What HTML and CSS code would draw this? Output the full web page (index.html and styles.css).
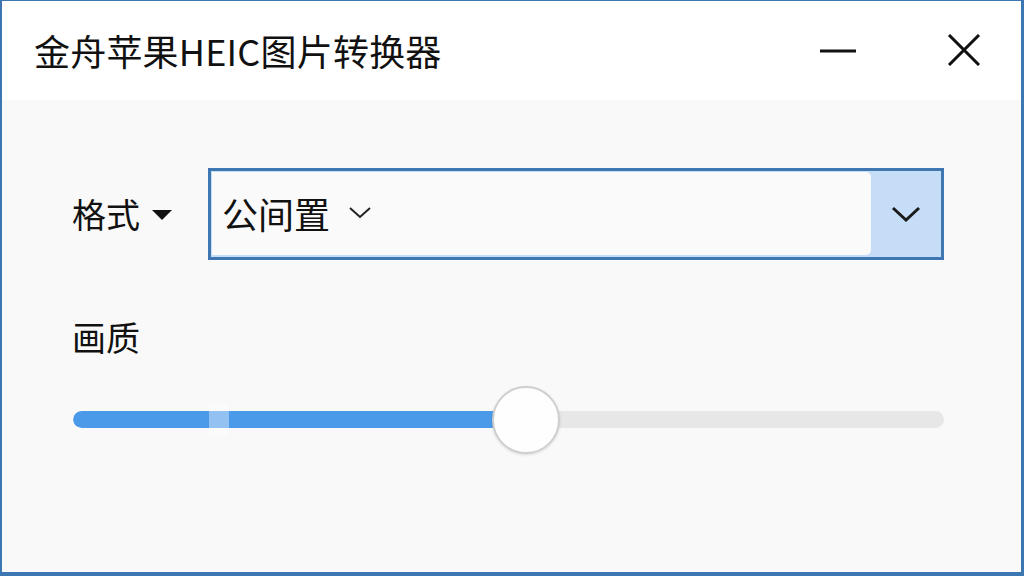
FILE: index.html
```html
<!DOCTYPE html>
<html lang="zh-CN">
<head>
<meta charset="utf-8">
<title>金舟苹果HEIC图片转换器</title>
<link rel="stylesheet" href="styles.css">
</head>
<body>
<div class="window">
  <header class="titlebar">
    <h1 class="title">金舟苹果HEIC图片转换器</h1>
    <div class="controls">
      <button class="ctl min" aria-label="最小化">
        <svg width="36" height="6" viewBox="0 0 36 6"><line x1="0" y1="3" x2="36" y2="3" stroke="#111" stroke-width="3"/></svg>
      </button>
      <button class="ctl close" aria-label="关闭">
        <svg width="34" height="32" viewBox="0 0 34 32"><path d="M2 1 L32 31 M32 1 L2 31" stroke="#111" stroke-width="3" fill="none"/></svg>
      </button>
    </div>
  </header>
  <main class="content">
    <div class="row format-row">
      <div class="label dropdown-label">格式
        <svg class="tri" width="20" height="12" viewBox="0 0 20 12"><path d="M0 1 H20 L10 11 Z" fill="#111"/></svg>
      </div>
      <div class="combo">
        <div class="combo-field">
          <span class="combo-text">公间置</span>
          <svg class="small-chev" width="24" height="14" viewBox="0 0 24 14"><path d="M2 3 L12 12 L22 3" stroke="#222" stroke-width="2" fill="none"/></svg>
        </div>
        <div class="combo-btn">
          <svg width="30" height="16" viewBox="0 0 30 16"><path d="M2 2 L15 14 L28 2" stroke="#1a1a1a" stroke-width="3" fill="none"/></svg>
        </div>
      </div>
    </div>
    <div class="label quality-label">画质</div>
    <div class="slider">
      <div class="track">
        <div class="fill" style="width:453px"></div>
      </div>
      <div class="ghost"></div>
      <div class="thumb" style="left:419px"></div>
    </div>
  </main>
</div>
</body>
</html>
```
FILE: styles.css
```css
* { box-sizing: border-box; }
html, body { margin: 0; padding: 0; }
body {
  width: 1024px;
  height: 576px;
  overflow: hidden;
  font-family: "Noto Sans CJK SC", "Noto Sans", sans-serif;
  color: #111;
}
.window {
  width: 1024px;
  height: 576px;
  border: 2px solid #3d77b3;
  border-top-width: 1px;
  border-bottom-width: 4px;
  border-right-width: 3px;
  display: flex;
  flex-direction: column;
  background: #f9f9f9;
}
.titlebar {
  height: 99px;
  background: #ffffff;
  display: flex;
  align-items: center;
  justify-content: space-between;
  padding-left: 32px;
  flex-shrink: 0;
}
.title {
  margin: 0;
  font-size: 36px;
  font-weight: 400;
  line-height: 1;
  letter-spacing: 0.2px;
  color: #111;
  margin-top: -1px;
}
.controls {
  display: flex;
  align-items: center;
  padding-right: 40px;
}
.ctl {
  border: 0;
  background: transparent;
  padding: 0;
  display: flex;
  align-items: center;
}
.ctl.min { margin-right: 91px; }
.ctl.close { margin-top: -2px; }
.content {
  flex: 1;
  padding: 68px 0 0 70px;
  position: relative;
}
.row {
  display: flex;
  align-items: center;
}
.label {
  font-size: 34px;
  line-height: 1;
  color: #111;
}
.dropdown-label {
  width: 136px;
  display: flex;
  align-items: center;
  gap: 12px;
}
.tri { margin-top: 2px; }
.combo {
  width: 736px;
  height: 92px;
  border: 3px solid #3f77b2;
  background: #c5ddf6;
  display: flex;
}
.combo-field {
  flex: 1;
  background: #fafafa;
  margin: 1px 0 2px 1px;
  border-radius: 0 5px 5px 0;
  display: flex;
  align-items: center;
  padding-left: 10px;
}
.combo-text {
  font-size: 36px;
  line-height: 1;
  margin-top: -2px;
}
.small-chev {
  margin-left: 18px;
  margin-top: -4px;
}
.combo-btn {
  width: 70px;
  display: flex;
  align-items: center;
  justify-content: center;
}
.quality-label {
  margin-top: 60px;
}
.slider {
  position: relative;
  margin-top: 57px;
  margin-left: 1px;
  width: 871px;
  height: 17px;
}
.track {
  height: 17px;
  border-radius: 9px;
  background: #e7e7e7;
  overflow: hidden;
}
.fill {
  height: 100%;
  background: #4b9aea;
  border-radius: 9px 0 0 9px;
}
.ghost {
  position: absolute;
  left: 136px;
  top: -7px;
  width: 20px;
  height: 32px;
  border-radius: 5px;
  background: rgba(255, 255, 255, 0.4);
}
.thumb {
  position: absolute;
  top: -25px;
  width: 68px;
  height: 68px;
  border-radius: 50%;
  background: #fefefe;
  border: 2px solid #cfcfcf;
  box-shadow: 0 1px 3px rgba(0, 0, 0, 0.12);
}
```
